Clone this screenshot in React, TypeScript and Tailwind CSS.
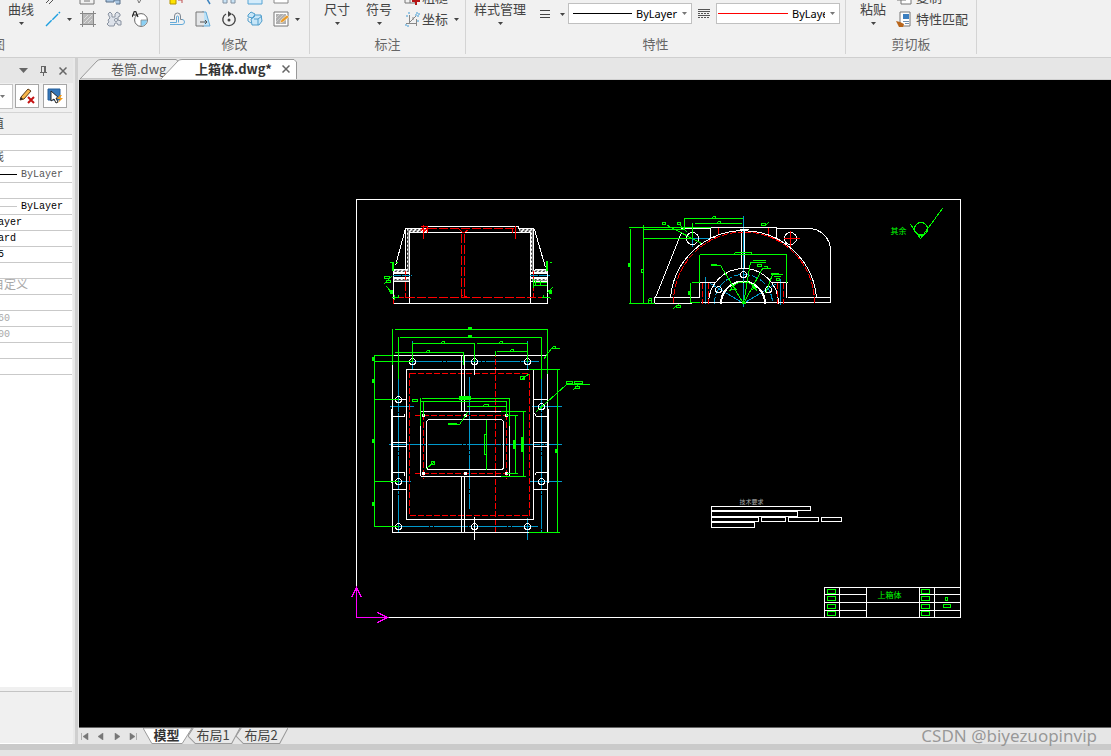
import type { ReactNode } from "react";

type PropertyRow = {
  label: string;
  text?: string;
  textClass?: string;
  lineClass?: string;
};

const UI_FONT = "font-['Noto_Sans_CJK_SC','Noto_Sans',sans-serif]";

const propertyRows: PropertyRow[] = [
  { label: "r1" },
  { label: "r2", text: "线", textClass: "-ml-2 text-[#555]" },
  { label: "r3", text: "ByLayer", textClass: "text-[#555]", lineClass: "bg-black" },
  { label: "r4" },
  { label: "r5", text: "ByLayer", textClass: "text-black", lineClass: "bg-[#c8c8c8]" },
  { label: "r6", text: "ayer", textClass: "-ml-0.5 text-black" },
  { label: "r7", text: "ard", textClass: "-ml-0.5 text-black" },
  { label: "r8", text: "5", textClass: "-ml-0.5 text-black" },
  { label: "r9" },
  { label: "r10", text: "自定义", textClass: "-ml-2 text-[#a8a8a8]" },
  { label: "r11" },
  { label: "r12", text: "60", textClass: "-ml-0.5 text-[#a8a8a8]" },
  { label: "r13", text: "00", textClass: "-ml-0.5 text-[#a8a8a8]" },
  { label: "r14" },
  { label: "r15" },
];

function Caret({ className = "text-[#444]" }: { className?: string }) {
  return (
    <svg viewBox="0 0 5 3" className={`h-[3px] w-[5px] shrink-0 ${className}`}>
      <path d="M0 0H5L2.5 3Z" fill="currentColor" />
    </svg>
  );
}

function Icon({ children }: { children: ReactNode }) {
  return (
    <svg viewBox="0 0 16 16" className="h-4 w-4 shrink-0" fill="none">
      {children}
    </svg>
  );
}

function IconButton({ label, children }: { label: string; children: ReactNode }) {
  return (
    <button aria-label={label} className="shrink-0">
      {children}
    </button>
  );
}

function BigButton({ text }: { text: string }) {
  return (
    <button className="flex shrink-0 flex-col items-center self-end text-[13px] leading-[18px] text-[#444]">
      {text}
      <span className="flex h-3 items-start pt-1">
        <Caret />
      </span>
    </button>
  );
}

function RibbonGroup({ title, className, titleClass = "text-center", children }: {
  title: string;
  className: string;
  titleClass?: string;
  children: ReactNode;
}) {
  return (
    <section className={`flex h-[54px] shrink-0 flex-col border-r border-[#d4d4d4] ${className}`}>
      <div className="flex h-[30px] items-end overflow-hidden">{children}</div>
      <h2 className={`mt-1.5 text-[13px] leading-4 text-[#666] ${titleClass}`}>{title}</h2>
    </section>
  );
}

/* 两行小图标，上面一行只露出底部 */
function ToolRows({ top, bottom, className = "" }: { top: ReactNode; bottom: ReactNode; className?: string }) {
  return (
    <div className={`flex flex-col self-end ${className}`}>
      <div className="flex h-[22px] items-center gap-2.5">{top}</div>
      <div className="flex h-[22px] items-center gap-2.5">{bottom}</div>
    </div>
  );
}

function LayerSelect({ label, line, selectClass }: { label: string; line: ReactNode; selectClass: string }) {
  return (
    <div className="mb-1.5 flex h-[21px] w-[124px] shrink-0 items-center border border-[#c0c0c0] bg-white">
      {line}
      <select
        aria-label={label}
        className={`ml-1 appearance-none overflow-hidden bg-transparent font-['Noto_Sans',sans-serif] text-[11px] leading-4 text-black outline-none ${selectClass}`}
      >
        <option>ByLayer</option>
      </select>
      <span className="ml-auto mr-1 flex">
        <Caret className="text-[#777]" />
      </span>
    </div>
  );
}

function Ribbon() {
  return (
    <header className="flex h-[58px] shrink-0 overflow-hidden border-b border-[#cfcfcf] bg-[#f1f1f1]">
      <RibbonGroup title="图" className="w-[160px]" titleClass="-ml-2">
        <div className="ml-2 mr-[11px]">
          <BigButton text="曲线" />
        </div>
        <ToolRows
          top={
            <>
              <Icon>
                <path d="M1 14L12 3M4 15L14 5" stroke="#555" />
              </Icon>
              <span className="-mx-2 w-[14px]" />
              <Icon>
                <path d="M1 2H15V15H1ZM5 12H11" stroke="#777" />
              </Icon>
              <Icon>
                <path d="M1 9H9V13H1ZM9 11H15V15H11" fill="#a9c6e2" stroke="#5a7089" />
              </Icon>
              <Icon>
                <path d="M4 5L8 14L12 7" stroke="#777" />
              </Icon>
            </>
          }
          bottom={
            <>
              <IconButton label="直线">
                <Icon>
                  <path d="M1 15L15 1" stroke="#1e9fe0" strokeDasharray="8 1" strokeWidth="1.4" />
                </Icon>
              </IconButton>
              <span className="-ml-1 -mr-0.5 flex items-center">
                <Caret />
              </span>
              <IconButton label="填充">
                <Icon>
                  <path d="M3 3H13V13H3Z" fill="#b8b8b8" />
                  <path d="M2.500 0V16M13.500 0V16M0 2.500H16M0 13.500H16" stroke="#888" />
                  <path d="M4 8L8 4M4 12L12 4M8 12L12 8" stroke="#ddd" />
                </Icon>
              </IconButton>
              <IconButton label="块">
                <Icon>
                  <path
                    d="M2 3L4 1L6 3V6H9V3L11 1L14 3V5L12 6V9L15 10V14H12L11 12H9L8 15H3L1 13L3 11L2 9L4 7Z"
                    fill="#dde2ea"
                    stroke="#8992a0"
                  />
                  <circle cx="10" cy="9" r="1.5" fill="#fff" stroke="#8992a0" />
                </Icon>
              </IconButton>
              <IconButton label="文字圆">
                <Icon>
                  <circle cx="9" cy="9" r="6.4" fill="#fff" stroke="#666" />
                  <path d="M9 9H15A6 6 0 0 1 9 15Z" fill="#8bd0f4" />
                  <path d="M9 15V9H15" stroke="#888" strokeWidth=".8" />
                  <path d="M0 6L2.5 0H3.5L6 6M1.5 4H4.5" stroke="#222" strokeWidth="1.2" />
                </Icon>
              </IconButton>
            </>
          }
        />
      </RibbonGroup>

      <RibbonGroup title="修改" className="w-[150px]">
        <ToolRows
          className="ml-[9px]"
          top={
            <>
              <Icon>
                <path d="M1 9H7V15H1Z" fill="#ffe300" stroke="#b39300" />
                <path d="M9 11H13V14" stroke="#c05050" />
              </Icon>
              <Icon>
                <path d="M9 5L15 15" stroke="#3c83bf" strokeWidth="1.5" />
              </Icon>
              <Icon>
                <path d="M2 5H6V14H2ZM10 5H14V14H10Z" fill="#c9e3f5" stroke="#8292a2" />
              </Icon>
              <Icon>
                <path d="M1 2H15V15H1Z" fill="#d4ecfb" stroke="#57a4d4" />
              </Icon>
              <Icon>
                <path d="M1 2H15V14H1Z" fill="#fff" stroke="#888" />
              </Icon>
            </>
          }
          bottom={
            <>
              <IconButton label="偏移">
                <Icon>
                  <path d="M1 8.500H5.500V5A3 3 0 0 1 11.500 5V8.500H14" stroke="#7d8792" />
                  <path d="M1 13.500H13A2 2 0 0 0 13 8.500M1 11.500H7.500V6A1 1 0 0 1 9.500 6V11.500" stroke="#64abd9" />
                </Icon>
              </IconButton>
              <IconButton label="拉伸">
                <Icon>
                  <path d="M7 1L11 1L15 15H7Z" fill="#bde2f7" stroke="#64abd9" />
                  <path d="M1 1H9V15H1Z" fill="#e4e6e8" />
                  <path d="M9 1H1V15H9" stroke="#777" />
                  <path d="M5 11H12M10 9L12 11L10 13" stroke="#555" />
                </Icon>
              </IconButton>
              <IconButton label="旋转">
                <Icon>
                  <path d="M5 3A6.2 6.2 0 1 0 11 3" stroke="#444" strokeWidth="1.4" />
                  <path d="M7 0L11 3L7 6Z" fill="#444" />
                  <circle cx="8" cy="9" r="1.5" fill="#444" />
                </Icon>
              </IconButton>
              <IconButton label="阵列">
                <Icon>
                  <path d="M1 4L4 1L8 3L6 7L1 6ZM8 4H14L15 10L12 14H5L4 8Z" fill="#c7e6f8" stroke="#4f9dcb" />
                  <path d="M7 8H11V14M11 8L15 5M4 8L8 5M1 7V10L4 12" stroke="#4f9dcb" />
                </Icon>
              </IconButton>
              <IconButton label="编辑填充">
                <Icon>
                  <path d="M1 1H15V15H1Z" fill="#fff" stroke="#777" />
                  <path d="M3 3H13V13H3Z" fill="#b0b0b0" />
                  <path d="M3 7L7 3M3 11L11 3" stroke="#ccc" />
                  <path d="M7 12L8 9L14 4L16 6L10 11Z" fill="#e99b28" stroke="#fff" strokeWidth=".5" />
                </Icon>
              </IconButton>
              <span className="-ml-1">
                <Caret />
              </span>
            </>
          }
        />
      </RibbonGroup>

      <RibbonGroup title="标注" className="w-[156px]">
        <div className="ml-3.5 mr-3 flex gap-4">
          <BigButton text="尺寸" />
          <BigButton text="符号" />
        </div>
        <div className="flex flex-col text-[13px] text-[#444]">
          <button className="flex h-[22px] items-center gap-0.5">
            <Icon>
              <path d="M1 1H11V14H1ZM1 7H11M6 7V14" stroke="#777" />
              <path d="M8 12H16M12 8V16" stroke="#b51515" strokeWidth="2" />
            </Icon>
            粗糙
          </button>
          <button className="flex h-[22px] items-center gap-0.5">
            <Icon>
              <path d="M5.500 4V13M2 12.500H13M5 12L12 5M9 6V9M12.500 8V15" stroke="#888" />
              <path d="M2 5H5M12 2H15V5H12ZM1 14H4V16M13 10H16M5 1V4" stroke="#3e9ad4" strokeDasharray="2 1" />
            </Icon>
            坐标
            <span className="ml-1">
              <Caret />
            </span>
          </button>
        </div>
      </RibbonGroup>

      <RibbonGroup title="特性" className="w-[380px]">
        <div className="ml-2 mr-3.5">
          <BigButton text="样式管理" />
        </div>
        <button aria-label="线宽" className="mb-3 mr-[3px] flex shrink-0 items-center gap-2.5">
          <svg viewBox="0 0 10 8" className="h-2 w-2.5" stroke="#444" shapeRendering="crispEdges">
            <path d="M0 .5H10M0 4.5H10M0 7.5H10" />
          </svg>
          <Caret />
        </button>
        <LayerSelect
          label="线型"
          selectClass="w-[44px]"
          line={
            <svg viewBox="0 0 59 1" className="ml-1 h-px w-[59px] shrink-0">
              <rect width="59" height="1" fill="#000" />
            </svg>
          }
        />
        <svg
          viewBox="0 0 12 10"
          className="mx-[6px] mb-[11px] h-2.5 w-3 shrink-0"
          stroke="#555"
          shapeRendering="crispEdges"
        >
          <path d="M0 .5H12M0 2.500H12M0 6.5H12" />
          <path d="M0 4.500H12M0 8.5H12" strokeDasharray="2 1" />
        </svg>
        <LayerSelect
          label="颜色"
          selectClass="w-[33px]"
          line={
            <svg viewBox="0 0 70 1" className="ml-px h-px w-[70px] shrink-0">
              <rect width="70" height="1" fill="#ff0000" />
            </svg>
          }
        />
      </RibbonGroup>

      <RibbonGroup title="剪切板" className="w-[131px]">
        <div className="ml-3.5 mr-2.5">
          <BigButton text="粘贴" />
        </div>
        <div className="flex flex-col text-[13px] text-[#444]">
          <button className="flex h-[22px] items-center gap-1">
            <Icon>
              <path d="M1 2H10V11H1ZM5 6H15V15H5Z" fill="#fff" stroke="#777" />
            </Icon>
            复制
          </button>
          <button className="flex h-[22px] items-center gap-1">
            <Icon>
              <path d="M4 1H14V15H4Z" fill="#fff" stroke="#777" />
              <path d="M7 3H13V8H7Z" fill="#3c7fc0" />
              <path d="M7 10.500H13M9 12.500H13" stroke="#6f8fb0" />
              <path d="M0 10L4 11L8 13L7 16H3Z" fill="#b8651b" />
            </Icon>
            特性匹配
          </button>
        </div>
      </RibbonGroup>
    </header>
  );
}

function PropertyPanel() {
  return (
    <aside className="flex w-[75px] shrink-0 flex-col overflow-hidden border-r-2 border-[#e9e9e9] bg-[#f0f0f0]">
      <div className="flex h-[25px] shrink-0 items-center justify-end gap-3 bg-[#e6e6e6] pr-1.5 text-[#666]">
        <button aria-label="菜单">
          <svg viewBox="0 0 9 5" className="h-[5px] w-[9px]">
            <path d="M0 0H9L4.500 5Z" fill="currentColor" />
          </svg>
        </button>
        <button aria-label="固定">
          <svg viewBox="0 0 7 10" className="h-2.5 w-[7px]" fill="none" stroke="currentColor" shapeRendering="crispEdges">
            <path d="M1.500 6V.5H5.500V6M4.500 1V6M0 6.500H7M3.500 7V10" />
          </svg>
        </button>
        <button aria-label="关闭面板">
          <svg viewBox="0 0 8 8" className="h-2 w-2" fill="none" stroke="currentColor" strokeWidth="1.5">
            <path d="M.5 .5L7.500 7.500M7.500 .5L.5 7.500" />
          </svg>
        </button>
      </div>

      <div className="flex shrink-0 pt-px">
        <button aria-label="选择类型" className="flex h-[25px] w-[13px] items-center border border-l-0 border-[#c4c4c4] bg-white">
          <Caret className="text-[#777]" />
        </button>
        <button aria-label="清除选择" className="ml-0.5 h-6 w-6 border border-[#a6a6a6] bg-white p-[3px]">
          <Icon>
            <path d="M1 12L2 9L9 1L12 3L5 11Z" fill="#f7b64a" stroke="#5b3a16" />
            <path d="M1 12L2 9L4 11Z" fill="#222" />
            <path d="M9 9L15 15M15 9L9 15" stroke="#c41212" strokeWidth="2" />
          </Icon>
        </button>
        <button aria-label="快速选择" className="ml-1 h-6 w-6 border border-[#a6a6a6] bg-white p-[3px]">
          <Icon>
            <path d="M1 1H13V12H1Z" fill="#3577ba" stroke="#245f99" />
            <path d="M4 3V13L7 11L9 15L11 14L9 10H12Z" fill="#fff" stroke="#222" />
            <path d="M13 7L10 11H13L11 15L16 10H13L15 7Z" fill="#f39a16" />
          </Icon>
        </button>
      </div>

      <div className="mt-[3px] min-h-0 w-[72px] flex-1 border-t border-[#d4d4d4] bg-white">
        <table className="w-full table-fixed border-collapse font-['Liberation_Mono','Noto_Sans_CJK_SC',monospace]">
          <thead>
            <tr>
              <th className="h-[21px] border-b border-[#c9c9c9] bg-[#f0f0f0] p-0 text-left text-xs font-normal leading-4 text-[#444]">
                <span className="-ml-2 block pt-1">值</span>
              </th>
            </tr>
          </thead>
          <tbody>
            {propertyRows.map((row) => (
              <tr key={row.label}>
                <td className="h-4 overflow-hidden border-b border-[#c9c9c9] p-0">
                  <div className="flex h-[15px] items-center whitespace-nowrap">
                    {row.lineClass && <span className={`mr-1 h-px w-[17px] ${row.lineClass}`} />}
                    <span
                      className={`leading-[15px] ${row.text === "自定义" || row.text === "线" ? "text-xs" : "text-[10px]"} ${row.textClass ?? ""}`}
                    >
                      {row.text}
                    </span>
                  </div>
                </td>
              </tr>
            ))}
          </tbody>
        </table>
      </div>
      <div className="h-[57px] w-[72px] shrink-0 border-b border-white pt-1">
        <div className="border-t border-[#c4c4c4]" />
      </div>
    </aside>
  );
}

function DocumentTabs() {
  return (
    <nav className="flex h-[22px] shrink-0 items-end border-b border-[#d0d0d0] pl-px text-[13px]">
      <div className="relative h-5 w-[99px]">
        <svg viewBox="0 0 99 20" className="absolute inset-0 h-full w-full">
          <path d="M0 20L17 2Q18.500 .5 21 .5H96L99 3V20Z" fill="#f0f0f0" stroke="#999" />
        </svg>
        <button className="relative pl-[31px] leading-5 text-[#555]">卷筒.dwg</button>
      </div>
      <div className="relative -ml-[18px] flex h-5 w-[136px] items-center">
        <svg viewBox="0 0 136 20" className="absolute inset-0 h-full w-full">
          <path d="M0 20L17 2Q18.500 .5 21 .5H133L135.500 3V20" fill="#fff" stroke="#999" />
        </svg>
        <button className="relative pl-[34px] font-bold leading-5 text-[#333]">上箱体.dwg*</button>
        <button aria-label="关闭" className="relative ml-auto mr-[7px] text-[#666]">
          <svg viewBox="0 0 8 8" className="h-2 w-2" fill="none" stroke="currentColor" strokeWidth="1.500">
            <path d="M.5 .5L7.500 7.500M7.500 .5L.5 7.500" />
          </svg>
        </button>
      </div>
    </nav>
  );
}

const WHITE = "#fff";
const GREEN = "#0f0";
const RED = "#f00";
const BLUE = "#0099cc";

function FrontView() {
  return (
    <g>
      <path d="M406 228H427V232H409V269H406ZM518 228H533V269H530V232H518ZM393 269H409V272H393ZM393 278H409V281H393ZM531 269H547V272H531ZM531 278H547V281H531Z" fill="url(#hatch)" stroke="none" />
      <path
        stroke={WHITE}
        d="M393 269V303H547V269M409 303V232H530V303M427 226H518V228M405 269V228H427M518 228H533V269M405 228L395 265M534 229L545 267M393 269H406M534 269H547M393 272H409M393 273H409M393 277H409M393 278H409M393 281H409M530 272H547M530 273H547M530 277H547M530 278H547M530 281H547"
      />
      <path stroke={RED} strokeDasharray="9 2" d="M427 228H514M461 233V297M464 233V297M394 297H547M405 270V297M533 270V297" />
      <path stroke={RED} d="M423 224V238M515 225V238M512 228V232M459 229L462 232H464L468 229M420 231L424 226M423 232L427 227M420 226H427V232M460 297L462 295M464 295L467 297M393 298V303" />
      <path stroke={BLUE} strokeDasharray="8 1" d="M392 275H411M529 275H549" />
      <path
        stroke={GREEN}
        d="M393 261V270M392 261V270M389 262H391M395 262H397M384 276H389V278H384ZM386 280H390V282H386ZM383 284L391 276M386 286L392 293M388 290H392V293H389M391 297H398V294M394 294V299M388 291H391M389 292H392M547 260V270M546 260V270M549 262H551M533 278V287M535 279V285M533 282H546M533 285H546M540 280V285M552 287L546 293M547 290H551V293H548M547 291H551M548 292H551M541 297H548M543 294V297M549 297L551 299"
      />
    </g>
  );
}

function SideView() {
  return (
    <g>
      <path stroke={BLUE} d="M743 215V306M692 237V246M692 238H708M705 276V303M780 278V304M700 302H790M743 303L710 283M743 303L776 283" />
      <path stroke={BLUE} strokeDasharray="7 2" d="M714 303A29 29 0 0 1 772 303" />
      <path
        stroke={WHITE}
        d="M699 297H654V303H691M681 232L655 297M680 228H710M776 228H808A22 22 0 0 1 830 250V302M787 297H830M700 302H830M710 227H776V237H772M710 227V237H714M670 298A73.200 73.200 0 0 1 816 298M741 230V268M744 230V268M708 303A35 35 0 0 1 778 303M720 303A22.500 22.500 0 0 1 765 303M721 303A21.500 21.500 0 0 1 764 303M699 282V297M699 282H715M771 282H787M786 282V297M739 229H748"
      />
      <g stroke={WHITE}>
        <circle cx="692" cy="238" r="6" />
        <circle cx="790" cy="238" r="6" />
        <circle cx="718" cy="289" r="3" />
        <circle cx="743" cy="274" r="3" />
        <circle cx="768" cy="289" r="3" />
      </g>
      <path stroke={RED} strokeDasharray="6 2" d="M673 302A70.500 70.500 0 0 1 814 302M702 282V303M708 282V303M777 282V303M783 282V303M718 227V236M768 227V236" />
      <path stroke={RED} d="M783 238H799M790 230V246" />
      <path
        stroke={GREEN}
        d="M684 217V229M684 218H742M712 216H715V218M712 216V218M694 223H741M717 221H720V223M717 221V223M692 222V238M628 227H710M630 228V303M628 303H654M643 224V303M643 238H692M642 229H684M662 222H665V224H662ZM677 222H680V224H677ZM667 225L701 243M680 225L687 232M641 269H643V272H641ZM699 254H786M734 252H751V254M734 252V254M699 254V282M786 254V282M691 282H699M690 282V302M690 302H699M648 298H651V303M648 298V303M647 300H650M673 308L679 303M676 305H680V307H676ZM743 303L720 265H711M743 303L750 262H765M752 260H765M757 264H761V266H757ZM743 303L762 268H770M763 266H767V268M765 293L772 274H782M773 276H780M776 278H779V280H776ZM761 223H765V225H761ZM764 226L768 222M729 291A15 15 0 0 1 757 291M733 286L737 290M730 289H736M752 286L757 290M750 290L756 286"
      />
      <g fill={GREEN} transform="translate(-.5 -.5)">
        <rect x="628" y="263" width="3" height="4" />
        <rect x="688" y="291" width="2" height="4" />
        <rect x="771" y="273" width="8" height="2" />
        <rect x="742" y="302" width="4" height="2" />
        <rect x="711" y="264" width="6" height="2" />
      </g>
    </g>
  );
}

function PlanView() {
  const bolts = [
    [412, 361], [474, 361], [527, 361], [398, 399], [541, 406],
    [398, 481], [541, 481], [398, 526], [474, 526], [527, 526],
  ];
  return (
    <g>
      <path
        stroke={BLUE}
        strokeDasharray="34 1 3 1"
        d="M398 377V532M541 377V532M407 361H538M388 444H561M469 376V508M394 526H537M389 406H413M531 406H561M389 481H410M528 481H561M412 340V368M527 340V368M527 517V539"
      />
      <path stroke={RED} strokeDasharray="6 2" d="M409 373H529V515H409ZM423 405V478M506 405V478M414 415H513M414 473H513M495 350V532" />
      <path
        stroke={WHITE}
        d="M392 355H547V532H392ZM391 408V482M548 408V482M406 369H533V519H406ZM461 355V411M464 355V411M461 476V532M464 476V532M474 361V374M474 516V539M392 399H406M391 416H404V413M391 442H406M391 446H406M391 472H404V475M392 489H406M533 399H547M548 416H536L534 413M533 442H548M533 446H548M548 472H536L534 475M533 489H547"
      />
      <rect x="420" y="411" width="89" height="65" rx="2" stroke={WHITE} />
      <rect x="426" y="419" width="77" height="50" rx="3" stroke={WHITE} />
      <g stroke={WHITE}>
        {bolts.map(([cx, cy]) => (
          <circle key={`${cx}-${cy}`} cx={cx} cy={cy} r="3" />
        ))}
      </g>
      <g fill={WHITE} transform="translate(-.5 -.5)">
        {[[422, 414], [464, 414], [505, 414], [422, 472], [464, 472], [505, 472]].map(([x, y]) => (
          <rect key={`${x}-${y}`} x={x} y={y} width="3" height="3" />
        ))}
      </g>
      <path
        stroke={GREEN}
        d="M394 329H547M392 328V364M547 328V373M399 337H540M398 336V378M541 336V378M412 343H474M476 343H527M412 342V361M474 342V361M527 342V361M441 341H444V343M441 341V343M499 341H502V343M499 341V343M394 352H463M426 350H429V352M426 350V352M463 351V364M496 351H527M495 350V355M510 349H513V351M510 349V351M374 355V526M373 355H393M373 361H412M373 399H398M373 481H398M373 526H398M557 369V532M528 369H559M528 532H559M421 398H508M420 397V425M509 397V425M420 401H505M423 400V415M506 400V415M466 406H505M483 404H488V406M483 404V406M486 419V469M484 434H486V454H484ZM506 415H517M506 473H517M515 415V473M500 411H525M500 476H525M523 411V476M412 399H417V401H412ZM467 412L459 424H448M434 461L426 468M431 461H434V464H431ZM529 373L521 379M520 376H524V379H520ZM543 359L551 348H559M552 346H555V348M552 346V348M536 411L566 384H589M566 381H572V383H566ZM574 381H582V383H574ZM575 386H579V388H575ZM572 390L577 385"
      />
      <g fill={GREEN} transform="translate(-.5 -.5)">
        <rect x="468" y="327" width="4" height="3" />
        <rect x="468" y="335" width="4" height="3" />
        <rect x="372" y="357" width="2" height="4" />
        <rect x="372" y="379" width="3" height="4" />
        <rect x="372" y="439" width="3" height="4" />
        <rect x="372" y="502" width="3" height="4" />
        <rect x="555" y="449" width="3" height="4" />
        <rect x="459" y="396" width="12" height="4" />
        <rect x="513" y="440" width="3" height="9" />
        <rect x="521" y="437" width="3" height="15" />
        <rect x="448" y="423" width="9" height="2" />
      </g>
    </g>
  );
}

function TitleBlock() {
  const rowTops = [589, 596, 604, 611];
  return (
    <g>
      <path stroke={WHITE} d="M824 617V587H960M839 587V617M866 587V617M919 587V617M934 587V617M824 594H866M824 602H960M824 610H866M919 594H960M919 610H960" />
      <g stroke={GREEN}>
        {rowTops.map((y) => (
          <g key={y}>
            <rect x="827" y={y} width="8" height="4" />
            <rect x="921" y={y} width="8" height="4" />
          </g>
        ))}
        <rect x="945" y="597" width="2" height="3" />
        <rect x="943" y="604" width="7" height="3" />
      </g>
      <text x="877" y="597" fontSize="8" fill={GREEN}>上箱体</text>
    </g>
  );
}

function DrawingCanvas() {
  return (
    <div className="min-h-0 flex-1 bg-black">
      <svg
        viewBox="78.5 79.5 1032 647"
        className="h-full w-full font-['Noto_Sans_CJK_SC',sans-serif]"
        fill="none"
        shapeRendering="crispEdges"
        role="img"
        aria-label="上箱体"
      >
        <defs>
          <pattern id="hatch" width="4" height="4" patternUnits="userSpaceOnUse">
            <path d="M0 4L4 0" stroke={WHITE} strokeWidth="1.500" />
          </pattern>
        </defs>
        {/* 图框 */}
        <path stroke={WHITE} d="M356 199H960V617H356Z" />
        <FrontView />
        <SideView />
        <PlanView />

        {/* 其余粗糙度 */}
        <text x="890" y="233" fontSize="8" fill={GREEN}>其余</text>
        <circle cx="920.5" cy="228.5" r="6.5" stroke={GREEN} />
        <path stroke={GREEN} d="M910 224L920 238L942 208M917 234H923" />

        {/* 技术要求 */}
        <text x="739" y="503" fontSize="6" fill="#aaa">技术要求</text>
        <path
          stroke={WHITE}
          d="M711 506H810V510H711ZM711 511H797V516H711ZM711 517H758V521H711ZM761 517H785V521H761ZM788 517H818V521H788ZM821 517H841V521H821ZM711 522H754V527H711Z"
        />
        <TitleBlock />

        {/* 坐标系图标 */}
        <path stroke="#f0f" d="M356 588V617H387M351 597L356 587L361 597M377 612L387 617L377 622" />
      </svg>
    </div>
  );
}

function LayoutTab({ text, active = false, className }: { text: string; active?: boolean; className: string }) {
  return (
    <div className={`relative h-4 ${className}`}>
      <svg viewBox="0 0 50 16" preserveAspectRatio="none" className="absolute inset-0 h-full w-full">
        <path d={active ? "M0 0L9 15.500H40L50 0Z" : "M5 0L0 8L7 15.500H42L50 0"} fill={active ? "#fff" : "#e9e9e9"} stroke="#999" />
      </svg>
      <button className={`relative block w-full pr-0.5 text-center text-[13px] leading-[13px] ${active ? "font-bold text-[#333]" : "text-[#444]"}`}>
        {text}
      </button>
    </div>
  );
}

function LayoutTabs() {
  const arrows = [
    { label: "第一个", d: "M.5 0V7M7 0V7L2 3.500Z" },
    { label: "上一个", d: "M6 0V7L1 3.500Z" },
    { label: "下一个", d: "M2 0V7L7 3.500Z" },
    { label: "最后一个", d: "M7.500 0V7M1 0V7L6 3.500Z" },
  ];
  return (
    <nav className="flex h-[17px] shrink-0 items-start border-t border-[#666] pl-0.5">
      <div className="flex h-4 items-center gap-2 pt-px">
        {arrows.map((a) => (
          <button key={a.label} aria-label={a.label}>
            <svg viewBox="0 0 8 7" className="h-[7px] w-2">
              <path d={a.d} fill="#777" stroke="#777" strokeWidth=".5" />
            </svg>
          </button>
        ))}
      </div>
      <LayoutTab text="模型" active className="ml-1.5 w-[49px]" />
      <LayoutTab text="布局1" className="-ml-1 w-[52px]" />
      <LayoutTab text="布局2" className="-ml-1 w-[52px]" />
    </nav>
  );
}

export default function App() {
  return (
    <div className={`relative flex h-screen flex-col overflow-hidden bg-[#e6e6e6] ${UI_FONT}`}>
      <Ribbon />
      <main className="flex min-h-0 flex-1">
        <PropertyPanel />
        <div className="w-1 shrink-0 border-r border-[#e6e6e6] bg-[#cfcfcf]" />
        <div className="flex min-w-0 flex-1 flex-col">
          <DocumentTabs />
          <DrawingCanvas />
          <LayoutTabs />
        </div>
      </main>
      <footer className="h-3 shrink-0 border-t-[6px] border-[#cacaca] bg-[#e4e4e4]" />
      <p className="absolute bottom-2 right-3.5 font-['Noto_Sans',sans-serif] text-[17px] leading-6 text-[#8e8e8e]/90">
        CSDN @biyezuopinvip
      </p>
    </div>
  );
}
